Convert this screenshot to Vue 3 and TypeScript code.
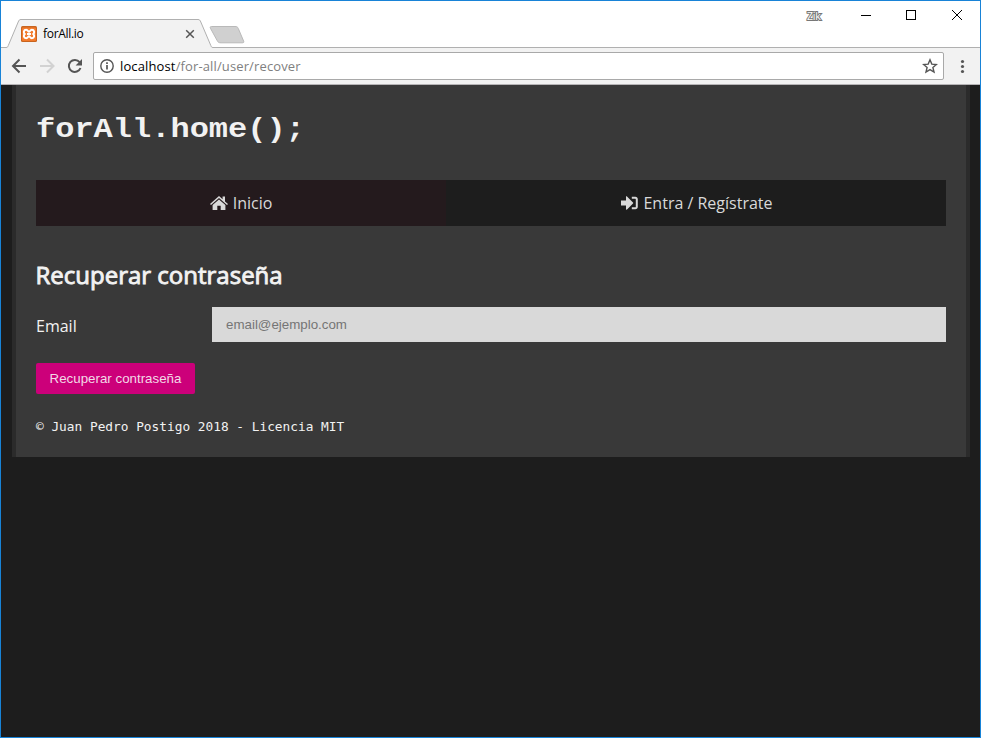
<script setup lang="ts">
import { ref } from 'vue'

const email = ref('')
const host = 'localhost'
const path = '/for-all/user/recover'
</script>

<template>
  <div class="window">
    <header class="titlebar">
      <svg class="tab-shape" width="250" height="30" viewBox="0 0 250 30">
        <path d="M0 29.5V28.5H5.5C6.8 28.5 7 27.8 7.5 26.5L17.2 3C17.9 1.2 18.4.5 20 .5H197C198.6 .5 199 1.2 199.8 3L209.6 26.5C210.1 27.8 210.4 28.5 212 28.5H250V30H0Z" fill="#f2f2f2" />
        <path d="M0 28.5H5C6.5 28.5 6.8 27.8 7.3 26.5L17.2 3C17.9 1.2 18.4 .5 20 .5H197C198.6 .5 199 1.2 199.8 3L209.8 26.5C210.3 27.8 210.6 28.5 212 28.5H250" fill="none" stroke="#b0b0b0" />
        <path d="M210.5 7.5H234C236 7.5 236.7 8 237.3 9.5L242.6 22C243.2 23.4 242.6 23.8 241.2 23.8H220C217.8 23.8 217 23.3 216.3 21.8L209.4 9.2C208.9 8.1 209.3 7.5 210.5 7.5Z" fill="#d0d0d0" stroke="#b9b9b9" />
      </svg>
      <div class="tab">
        <svg class="favicon" width="16" height="16" viewBox="0 0 16 16">
          <rect width="16" height="16" rx="1.5" fill="#c8641f" />
          <rect x="1" y="1.5" width="14" height="13.5" rx="1" fill="#f37a2b" />
          <path d="M5.2 3.8C7 3.8 7 5.8 8 5.8S9 3.8 10.8 3.8C13.6 3.8 13.6 6.9 12.3 8C13.6 9.1 13.6 12.2 10.8 12.2C9 12.2 9 10.2 8 10.2S7 12.2 5.2 12.2C2.4 12.2 2.4 9.1 3.7 8C2.4 6.9 2.4 3.8 5.2 3.8Z" fill="none" stroke="#fff" stroke-width="2" />
          <path d="M6 8H10" stroke="#fff" stroke-width="2" />
        </svg>
        <span class="tab-title">forAll.io</span>
        <svg width="10" height="10" viewBox="0 0 10 10"><path d="M1.2 1.2L8.8 8.8M8.8 1.2L1.2 8.8" stroke="#555" stroke-width="1.5" /></svg>
      </div>
      <div class="controls">
        <span class="profile">Zik</span>
        <svg width="157" height="12" viewBox="0 0 157 12" fill="none" stroke="#000">
          <path d="M38 6.5H48" />
          <rect x="83.5" y="1.5" width="9" height="9" />
          <path d="M129 1L139 11M139 1L129 11" />
        </svg>
      </div>
    </header>
    <nav class="toolbar">
      <svg class="nav-icons" width="92" height="36" viewBox="0 0 92 36" fill="none" stroke-width="2">
        <path d="M25 18H12.5M18.5 11.5L12 18L18.5 24.5" stroke="#555" />
        <path d="M39 18H52M46 11.5L52.5 18L46 24.5" stroke="#d2d2d2" />
        <path d="M78.6 14.2A6 6 0 1 0 79.5 20" stroke="#555" />
        <path d="M81 11V17.4H74.6Z" fill="#555" />
      </svg>
      <div class="address">
        <svg width="14" height="14" viewBox="0 0 14 14">
          <circle cx="7" cy="7" r="6.2" fill="none" stroke="#555" stroke-width="1.4" />
          <path d="M7 6V10.5M7 3.3V5" stroke="#555" stroke-width="1.7" />
        </svg>
        <span class="url"><b>{{ host }}</b>{{ path }}</span>
        <svg width="16" height="16" viewBox="0 0 16 16">
          <path d="M8 1.8L9.8 6.1L14.4 6.5L10.9 9.5L12 14.1L8 11.6L4 14.1L5.1 9.5L1.6 6.5L6.2 6.1Z" fill="none" stroke="#555" stroke-width="1.4" />
        </svg>
      </div>
      <svg width="36" height="36" viewBox="0 0 36 36" fill="#555">
        <circle cx="18.5" cy="13.5" r="1.6" /><circle cx="18.5" cy="18.5" r="1.6" /><circle cx="18.5" cy="23.5" r="1.6" />
      </svg>
    </nav>
    <main class="page">
      <section class="card">
        <h1>forAll.home();</h1>
        <div class="menu">
          <a class="item active">
            <svg width="18" height="14" viewBox="0 0 18 14" fill="currentColor">
              <path d="M9 0L12.6 3.2V.6H15V5.4L18 8L17 9.1L9 2.1L1 9.1L0 8Z" />
              <path d="M9 3.4L15.4 9V14H10.7V9.8H7.3V14H2.6V9Z" />
            </svg>
            <span>Inicio</span>
          </a>
          <a class="item login">
            <svg width="17" height="14" viewBox="0 0 17 14" fill="currentColor">
              <path d="M0 4.5H5V.8C5 .2 5.6 .2 6 .5L12 6.4C12.4 6.8 12.4 7.2 12 7.6L6 13.4C5.6 13.8 5 13.7 5 13.1V9.5H0Z" />
              <path d="M10.8 .8H14.3C15.9 .8 16.8 1.7 16.8 3.3V10.7C16.8 12.3 15.9 13.2 14.3 13.2H10.8V11.2H14C14.6 11.2 14.8 11 14.8 10.4V3.6C14.8 3 14.6 2.8 14 2.8H10.8Z" />
            </svg>
            <span>Entra / Regístrate</span>
          </a>
        </div>
        <h2>Recuperar contraseña</h2>
        <form @submit.prevent>
          <div class="field">
            <label for="email">Email</label>
            <input id="email" v-model="email" type="email" placeholder="email@ejemplo.com">
          </div>
          <button type="submit">Recuperar contraseña</button>
        </form>
        <footer>© Juan Pedro Postigo 2018 - Licencia MIT</footer>
      </section>
    </main>
  </div>
</template>

<style>
body {
  margin: 0;
  overflow: hidden;
}
</style>

<style scoped>
* {
  box-sizing: border-box;
}
svg {
  display: block;
  flex: none;
}
.window {
  width: 981px;
  height: 738px;
  border: 1px solid #1883d7;
  display: flex;
  flex-direction: column;
  background: #1d1d1d;
  font-family: "Open Sans", sans-serif;
}
.titlebar {
  position: relative;
  flex: none;
  height: 47px;
  background: #fff;
  border-bottom: 1px solid #b0b0b0;
  display: flex;
  justify-content: space-between;
}
.tab-shape {
  position: absolute;
  left: 0;
  top: 18px;
}
.tab {
  position: relative;
  display: flex;
  align-items: center;
  width: 194px;
  height: 28px;
  margin-top: 19px;
  padding-left: 20px;
}
.tab-title {
  flex: 1;
  margin-left: 6px;
  font-size: 12px;
  letter-spacing: -0.3px;
  line-height: 16px;
  color: #000;
}
.controls {
  display: flex;
  align-items: center;
  height: 28px;
}
.profile {
  width: 16px;
  font-size: 10.5px;
  line-height: 14px;
  letter-spacing: -0.2px;
  color: #fff;
  margin-top: 2px;
  -webkit-text-stroke: 2px #777;
  paint-order: stroke fill;
}
.toolbar {
  flex: none;
  height: 37px;
  display: flex;
  align-items: center;
  background: #f2f2f2;
  border-bottom: 1px solid #b6b4b6;
}
.address {
  flex: 1;
  height: 28px;
  display: flex;
  align-items: center;
  padding: 0 5px 0 6px;
  background: #fff;
  border: 1px solid #a9a9a9;
  border-radius: 2px;
}
.url {
  flex: 1;
  margin-left: 6px;
  font-size: 13px;
  letter-spacing: 0.13px;
  line-height: 18px;
  color: #808080;
}
.url b {
  font-weight: 400;
  color: #000;
}
.page {
  padding: 0 10px 0 11px;
}
.card {
  height: 372px;
  padding: 24px 20px 0;
  background: #393939;
  border: solid #2b2b2b;
  border-width: 0 4px;
  color: #f2f2f2;
}
h1 {
  margin: 0;
  font: bold 32px/40px "Liberation Mono", monospace;
  transform: scaleY(0.87);
  transform-origin: 0 31px;
}
.menu {
  display: flex;
  height: 46px;
  margin-top: 31px;
  background: #1d1d1d;
  color: #d9d9d9;
}
.item {
  display: flex;
  align-items: center;
  justify-content: center;
  gap: 5px;
  flex: 1;
  font-size: 16px;
  line-height: 24px;
}
.item.active {
  flex: none;
  width: 410px;
  background: #241a1d;
}
.item.login {
  padding-left: 2px;
}
h2 {
  margin: 31px 0 0 -0.5px;
  font-size: 24px;
  line-height: 36px;
  font-weight: 400;
  -webkit-text-stroke: 0.9px #f2f2f2;
}
.field {
  display: flex;
  align-items: center;
  margin-top: 14px;
}
label {
  width: 176px;
  font-size: 16px;
  line-height: 24px;
  padding-top: 2px;
}
input {
  flex: 1;
  height: 35px;
  padding: 0 14px;
  border: 0;
  border-radius: 0;
  background: #d9d9d9;
  font: 13.33px "Liberation Sans", sans-serif;
}
input::placeholder {
  color: #757575;
}
button {
  display: block;
  width: 159px;
  height: 31px;
  margin-top: 21px;
  padding: 0;
  border: 0;
  border-radius: 2px;
  background: #cc007a;
  color: #f2d9e6;
  font: 13.33px "Liberation Sans", sans-serif;
}
footer {
  margin-top: 23px;
  font: 12.8px/20px "DejaVu Sans Mono", monospace;
  white-space: nowrap;
}
</style>
